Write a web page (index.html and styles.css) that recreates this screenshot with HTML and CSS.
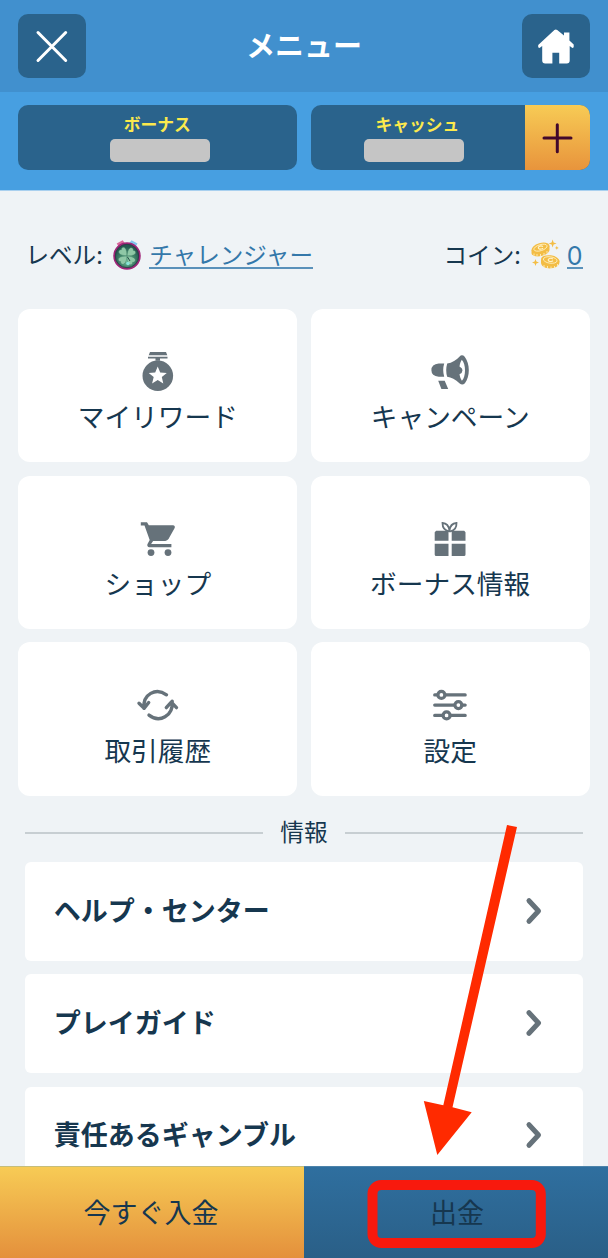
FILE: index.html
```html
<!DOCTYPE html>
<html lang="ja">
<head>
<meta charset="utf-8">
<title>メニュー</title>
<link rel="stylesheet" href="styles.css">
</head>
<body>
<div class="screen">
  <header class="header">
    <button class="square-btn" aria-label="閉じる">
      <svg width="68" height="64" viewBox="18.5 13.5 68 64"><path d="M38.500 32 66.200 60M66.200 32 38.500 60" stroke="#fff" stroke-width="3" stroke-linecap="round"/></svg>
    </button>
    <h1 class="title">メニュー</h1>
    <button class="square-btn" aria-label="ホーム">
      <svg width="68" height="64" viewBox="521.8 13.5 68 64"><path fill="#fff" d="M554.2 29.5q1.4-1 2.8 0l6.8 5.5v-3h5.4v8l4.300 4v2.600q-.8 1.500-2 .5l-2-1.600V60q0 3-3 3h-7.500V52.300h-6.800V63h-7.200q-3 0-3-3V45.500l-2 1.600q-1.200 1-2-.5V44.400z"/></svg>
    </button>
  </header>

  <section class="balances">
    <div class="balance">
      <div class="balance-info"><span class="balance-label">ボーナス</span><span class="mask"></span></div>
    </div>
    <div class="balance">
      <div class="balance-info cash"><span class="balance-label">キャッシュ</span><span class="mask"></span></div>
      <button class="plus" aria-label="追加">
        <svg width="64" height="64" viewBox="0 0 64 64"><path d="M19 32h27M32.300 18.700v27" stroke="#42082c" stroke-width="3" stroke-linecap="round"/></svg>
      </button>
    </div>
  </section>

  <main class="main">
    <div class="status">
      <div class="status-item">
        <span>レベル:</span>
        <svg class="medal" width="30" height="32" viewBox="113 239 30 32">
          <defs><radialGradient id="gem" cx=".5" cy=".65"><stop offset="0" stop-color="#7fd4ac"/><stop offset=".55" stop-color="#43886c"/><stop offset="1" stop-color="#245a50"/></radialGradient></defs>
          <path fill="#d9679b" d="m117.700 243.500 6-3.200 2.500 3.500-6.500 3z"/><path fill="#80c7ed" d="m130 243.500 2.500-3.200 6 3.200-2 3.500z"/>
          <circle cx="128" cy="256" r="12.900" fill="url(#gem)" stroke="#a02478" stroke-width="1.700"/>
          <circle cx="128" cy="256" r="11.700" fill="none" stroke="#34354a" stroke-width=".9"/>
          <g fill="#8fc8a6" stroke="#3b7a60" stroke-width=".4">
            <path id="leaf" d="M128 256c-.3-3.500 0-6-2.300-8.300-1.800-1-3.500.3-3.300 2-1.800-.3-3.300 1.200-2.500 3.200 1.700 2.500 4.800 2.600 8.100 3.100z"/>
            <use href="#leaf" transform="rotate(90 128 256)"/><use href="#leaf" transform="rotate(180 128 256)"/><use href="#leaf" transform="rotate(270 128 256)"/>
          </g>
          <path d="m128.500 257 2.500 4" stroke="#234f46" stroke-width="1"/><circle cx="129" cy="263.500" r="1.800" fill="#8be4d8"/>
        </svg>
        <a class="link" href="#">チャレンジャー</a>
      </div>
      <div class="status-item coins">
        <span>コイン:</span>
        <svg width="30" height="32" viewBox="531 240 30 32">
          <g fill="#f3bd45">
            <path d="M531.500 251v3.200c1 6 17 3 18-3.200v-4z"/>
            <path d="M541 261v3c1 7.500 17 7 18.400 0v-2.500z"/>
            <ellipse cx="540.500" cy="248.800" rx="9.200" ry="4.700" transform="rotate(-17 540.500 248.800)"/>
            <ellipse cx="550.200" cy="261.200" rx="9.300" ry="4.900" transform="rotate(8 550.200 261.200)"/>
            <path d="m552.600 240.500 1 3 3 1-3 1-1 3-1-3-3-1 3-1zM535.500 260l.9 2.600 2.600.9-2.600.9-.9 2.600-.9-2.600-2.600-.9 2.600-.9zM556.800 247l.6 1.300 1.300.6-1.300.6-.6 1.300-.6-1.300-1.300-.6 1.300-.6z"/>
          </g>
          <g fill="none" stroke="#fff3c8" stroke-width=".8">
            <ellipse cx="540.500" cy="248.700" rx="6.800" ry="3" transform="rotate(-17 540.500 248.700)"/>
            <ellipse cx="550.200" cy="261" rx="6.900" ry="3.200" transform="rotate(8 550.200 261)"/>
            <path d="M543 247.500c-3-1.800-6 .8-4 2.200 1.400.9 3.500.2 4-.6M553 260c-3-1.800-6 .3-4.200 2 1.400.9 3.600.5 4.200-.3" stroke-width="1.200"/>
            <path d="M534 254.500v2M537 255v2.500M540.500 255v2.500M544 254v2.500M547 252v2.500M544 266v2.500M547.500 267v2.500M551 267.500v2.500M554.500 267v2.500M557.500 265v2.500"/>
          </g>
        </svg>
        <a class="link zero" href="#"><span>0</span></a>
      </div>
    </div>

    <nav class="grid">
      <a class="card">
        <svg class="icon" viewBox="128 349 60 44"><path d="M150 352h16l1.300 3.300h-18.600zM148 356.800h19.500v1.700H160v2.300h-4.500v-2.300H148z"/><circle cx="157.800" cy="375.700" r="15.300"/><path fill="#fff" d="m157.700 366.500 2.500 5.900 6.600.5-5 4.200 1.500 6.400-5.600-3.500-5.600 3.500 1.600-6.400-5-4.200 6.500-.5z"/></svg>
        <span class="label">マイリワード</span>
      </a>
      <a class="card">
        <svg class="icon" viewBox="420.3 349 60 44"><path d="M444.500 363.500q-2 6.500 0 13.300H439q-7.300-1-7.300-6.600 0-6 7.300-6.700zM438.500 380.700h6.500l3.500 8.200h-6.800z"/><path fill-rule="evenodd" d="M447.500 363.500q7-1 13.500-8 2.200-.8 4 1.200c5.500 7 5.500 20 .2 26.500q-2.500 2.500-5.200.2-6.500-6-12.500-6.600-2-6.500 0-13.300zm14.600-3.800c-1.200 1.700-1.900 4-2.300 6.700q3 1.300 3 3.900t-3 4c.4 2.500 1.200 4.800 2.400 6.500 4.200-4 4.200-17-.1-21.100z"/></svg>
        <span class="label">キャンペーン</span>
      </a>
      <a class="card">
        <svg class="icon" viewBox="128 515.7 60 44"><path fill-rule="evenodd" d="M140.800 522h6.200l1.800 3h24.500q2 .4 1.500 2.500l-6.300 11.300q-1.200 1.800-3.200 1.800h-12.200l-2 3h20.300v3.300h-22q-2.600-.5-2-3l2.300-4.200-5.200-14.400h-3.700z"/><circle cx="151" cy="552.300" r="3.400"/><circle cx="168" cy="552.300" r="3.400"/></svg>
        <span class="label">ショップ</span>
      </a>
      <a class="card">
        <svg class="icon" viewBox="420.3 515.7 60 44"><path d="M436.500 530.500h12.300v10H435v-8.500zM452 530.500h12.500l1.300 1.500v8.500H452zM435 543.500h13.800v12.300h-12.300q-1.500 0-1.500-1.500zM452 543.500h13.800v10.800q0 1.500-1.500 1.500H452z"/><path fill="none" stroke="#66727a" stroke-width="1.800" d="M449.300 531q-6.500-1.200-6.500-8.300 6 .4 7 7.500.7-7 7-7.500.2 7-6 8.300z"/></svg>
        <span class="label">ボーナス情報</span>
      </a>
      <a class="card">
        <svg class="icon line" viewBox="128 682.4 60 44"><g stroke-width="3.400"><path d="M166.500 695.200c-10.500-7.700-24-.6-22.500 13.500M139 703.700l5.200 5 4.500-5.800M149 715.500c10.500 8.300 24.500 1 23.200-14M166.300 708l5-5.500 5.200 5.500"/></g></svg>
        <span class="label">取引履歴</span>
      </a>
      <a class="card">
        <svg class="icon line" viewBox="420.3 682.4 60 44"><g stroke-width="3.200"><path d="M435 695.300h3M445.500 695.300h20M435 705.500h19.500M462 705.500h3.500M435 715.800h8M450.500 715.800h15"/><circle cx="441.700" cy="695.300" r="3.500"/><circle cx="458.700" cy="705.500" r="3.500"/><circle cx="446.900" cy="715.800" r="3.500"/></g></svg>
        <span class="label">設定</span>
      </a>
    </nav>

    <h2 class="divider"><span>情報</span></h2>

    <nav class="list">
      <a class="row"><span>ヘルプ・センター</span><svg class="chevron" viewBox="0 0 18 28"><path d="m4 3.700 9.500 10.300L4 24.300"/></svg></a>
      <a class="row"><span>プレイガイド</span><svg class="chevron" viewBox="0 0 18 28"><path d="m4 3.700 9.500 10.300L4 24.300"/></svg></a>
      <a class="row"><span>責任あるギャンブル</span><svg class="chevron" viewBox="0 0 18 28"><path d="m4 3.700 9.500 10.300L4 24.300"/></svg></a>
    </nav>
  </main>

  <footer class="footer">
    <a class="deposit">今すぐ入金</a>
    <a class="withdraw">出金</a>
  </footer>

  <svg class="annotation" width="608" height="1258" viewBox="0 0 608 1258">
    <path fill="#ff2a00" d="m507 825 10 2-64.500 280.200 19.200 5L437.300 1155l-13.500-54 19.500 4.200z"/>
    <rect x="372.500" y="1185" width="168.300" height="58" rx="9" fill="none" stroke="#f8190d" stroke-width="10"/>
  </svg>
</div>
</body>
</html>
```

FILE: styles.css
```css
* { box-sizing: border-box; }
body {
  margin: 0;
  font-family: "Noto Sans CJK JP", sans-serif;
  color: #16374f;
}
button { border: 0; padding: 0; }
svg { display: block; flex: none; }

.screen {
  position: relative;
  display: flex;
  flex-direction: column;
  width: 608px;
  height: 1258px;
  overflow: hidden;
  background: #eff3f6;
}

.header {
  flex: none;
  display: flex;
  justify-content: space-between;
  height: 92px;
  padding: 13.500px 18.400px 0 18.400px;
  background: #4190ce;
}
.square-btn {
  width: 67.700px;
  height: 64.500px;
  border-radius: 10px;
  background: #2a638c;
}
.title {
  margin: 0;
  font-size: 29px;
  line-height: 61px;
  font-weight: 700;
  color: #fff;
}

.balances {
  flex: none;
  display: grid;
  grid-template-columns: 1fr 1fr;
  gap: 13.500px;
  height: 98.500px;
  padding: 13.400px 18.400px 19.600px;
  background: #479fe1;
  border-bottom: 1px solid #a9d0ef;
}
.balance {
  display: flex;
  border-radius: 10px;
  overflow: hidden;
  background: #2a638c;
}
.balance-info {
  flex: 1;
  display: flex;
  flex-direction: column;
  align-items: center;
  padding: 7px 0 0 4px;
}
.balance-info.cash { padding-left: 0; padding-right: 8px; }
.balance-label {
  height: 26.500px;
  padding-right: 5px;
  font-size: 16.800px;
  line-height: 25px;
  font-weight: 700;
  color: #fbe94d;
}
.cash .balance-label { padding-left: 7px; padding-right: 0; }
.mask {
  width: 100px;
  height: 23px;
  border-radius: 5px;
  background: #c5c5c5;
}
.plus {
  width: 64.500px;
  background: linear-gradient(#f7cb55, #e8943c);
}

.main {
  flex: 1;
  min-height: 0;
  overflow: hidden;
  padding: 44px 18.400px 0;
}
.status {
  display: flex;
  justify-content: space-between;
  height: 74.600px;
  padding: 0 7px;
  font-size: 23.600px;
  line-height: 38px;
}
.status-item { display: flex; align-items: flex-start; }
.status-item svg { margin-top: 4px; }
.status-item .medal { margin: 4px 7px 0 9.500px; }
.link {
  height: 34.600px;
  line-height: 38px;
  color: #3478aa;
  border-bottom: 2px solid #5a91ba;
  text-decoration: none;
}
.coins svg { margin-left: 10px; margin-right: 6px; }
.zero { font-family: Inter, sans-serif; font-size: 25px; line-height: 42px; }

.grid {
  display: grid;
  grid-template-columns: 1fr 1fr;
  grid-auto-rows: 153.300px;
  gap: 13.400px 13.500px;
}
.card {
  display: flex;
  flex-direction: column;
  align-items: center;
  padding-top: 40px;
  border-radius: 12px;
  background: #fff;
}
.icon { width: 60px; height: 44px; fill: #66727a; }
.icon.line { fill: none; stroke: #66727a; stroke-linecap: round; stroke-linejoin: round; }
.label { margin-top: 3.400px; font-size: 26.700px; line-height: 40px; }

.divider {
  display: flex;
  align-items: center;
  gap: 17.500px;
  height: 66.400px;
  margin: 0;
  padding: 9px 6.600px 0;
  font-size: 23.700px;
  line-height: 38px;
  font-weight: 400;
}
.divider span { padding-bottom: 5px; }
.divider::before, .divider::after {
  content: "";
  flex: 1;
  height: 2px;
  background: #c7ced2;
}

.list { display: grid; gap: 13.500px; padding: 0 6.600px; }
.row {
  display: flex;
  align-items: center;
  justify-content: space-between;
  height: 98.700px;
  padding: 0 40.500px 0 28.800px;
  border-radius: 6px;
  background: #fff;
  font-size: 27px;
  line-height: 40px;
  font-weight: 700;
}
.row span { padding-bottom: 3.500px; }
.chevron { width: 18px; height: 28px; margin-bottom: 1.500px; fill: none; stroke: #66727a; stroke-width: 5; stroke-linecap: round; stroke-linejoin: round; }

.footer {
  flex: none;
  display: grid;
  grid-template-columns: 1fr 1fr;
  height: 92px;
  font-size: 27px;
  line-height: 90px;
  text-align: center;
}
.deposit { padding-right: 2px; background: linear-gradient(#f7cb55, #e4903c); border-top: 1px solid #c5bd7b; }
.withdraw { padding-left: 2px; background: linear-gradient(#2f6f9f, #2a5f87); border-top: 1px solid #4c83aa; }

.annotation { position: absolute; inset: 0; pointer-events: none; }
```
